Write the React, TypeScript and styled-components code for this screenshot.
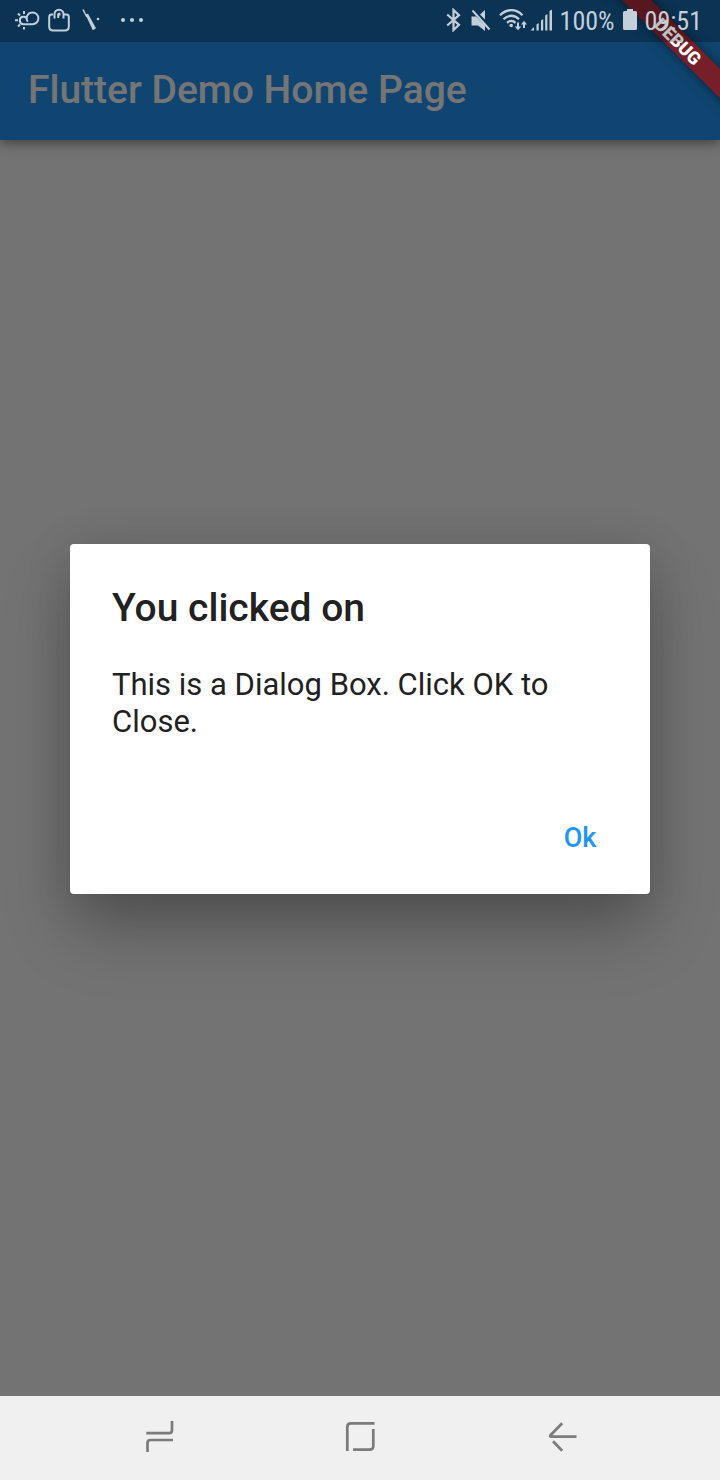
import React, { useState } from "react";
import styled, { createGlobalStyle } from "styled-components";

const GlobalStyle = createGlobalStyle`
  *, *::before, *::after { box-sizing: border-box; }
  body { margin: 0; font-family: Roboto, "Liberation Sans", sans-serif; }
  h1, h2, p { margin: 0; }
`;

const Screen = styled.div`
  display: flex;
  flex-direction: column;
  min-height: 100vh;
`;

const AppArea = styled.div`
  position: relative;
  flex: 1;
  display: flex;
  flex-direction: column;
  overflow: hidden;
  background: #fafafa;
`;

const AppBar = styled.header`
  display: flex;
  align-items: center;
  height: 140px;
  padding: 42px 28px 2px;
  background: #2196f3;
  box-shadow: 0 4px 11px rgba(0, 0, 0, 0.4);
`;

const AppTitle = styled.h1`
  font-size: 39px;
  line-height: 44px;
  font-weight: 500;
  color: #fff;
`;

const Scrim = styled.div`
  position: absolute;
  inset: 0;
  display: flex;
  align-items: center;
  justify-content: center;
  padding: 42px 70px 0;
  background: rgba(0, 0, 0, 0.54);
`;

const Dialog = styled.section`
  display: flex;
  flex-direction: column;
  width: 100%;
  background: #fff;
  border-radius: 4px;
  box-shadow: 0 36px 64px -4px rgba(0, 0, 0, 0.28),
    0 4px 48px rgba(0, 0, 0, 0.12);
`;

const DialogTitle = styled.h2`
  padding: 42px 42px 0;
  font-size: 39px;
  line-height: 44px;
  font-weight: 500;
  color: #212121;
`;

const DialogText = styled.p`
  padding: 36px 42px 42px;
  font-size: 31px;
  line-height: 37px;
  color: #212121;
`;

const DialogActions = styled.div`
  display: flex;
  justify-content: flex-end;
  padding: 14px;
`;

const FlatButton = styled.button`
  width: 112px;
  height: 84px;
  border: 0;
  padding: 0;
  background: transparent;
  color: #2196f3;
  font: 500 27px/32px Roboto, "Liberation Sans", sans-serif;
`;

const Ribbon = styled.div`
  position: absolute;
  top: 31px;
  right: -58px;
  width: 200px;
  height: 21px;
  transform: rotate(45deg);
  background: #761f28;
  box-shadow: 0 0 12px rgba(0, 0, 0, 0.5);
  color: #fff;
  font-size: 18px;
  line-height: 21px;
  font-weight: 900;
  text-align: center;
`;

const StatusBar = styled.div`
  position: absolute;
  inset: 0 0 auto;
  display: flex;
  align-items: center;
  justify-content: space-between;
  height: 42px;
  padding: 0 18px 2px 14px;
  background: rgba(0, 0, 0, 0.25);
  color: #c3d0da;
`;

const StatusGroup = styled.div<{ $gap: number }>`
  display: flex;
  align-items: center;
  gap: ${(p) => p.$gap}px;
`;

const StatusText = styled.span`
  font-family: "Roboto Condensed", "Liberation Sans Narrow", Roboto, sans-serif;
  font-size: 26px;
  line-height: 38px;
  padding-top: 1px;
`;

const NavBar = styled.nav`
  display: flex;
  height: 84px;
  padding: 0 60px;
  background: #f0f0f0;
`;

const NavButton = styled.button`
  flex: 1;
  display: flex;
  align-items: center;
  justify-content: center;
  border: 0;
  padding: 0 0 4px;
  background: transparent;
  color: #7b7b7b;
`;

type GlyphProps = { w: number; children: React.ReactNode };

const Glyph = ({ w, children }: GlyphProps) => (
  <svg width={w} height="24" viewBox={`0 0 ${w} 24`} fill="none" stroke="currentColor" strokeWidth="2" aria-hidden="true">
    {children}
  </svg>
);

const WeatherIcon = () => (
  <Glyph w={26}>
    <path d="M13 16.2H9.5a3.7 3.7 0 1 1 3.6-4.6M13 16.2h5.500a5.900 5.900 0 1 0-5.900-5.900c0 1.500.4 2.400 1.200 3.400" />
    <path d="M10 3v3M4 5.500l2 2M1 12.200h3M4 18.500l2-2M10 19v2.500M15.500 5l-.5.500" />
  </Glyph>
);

const BagIcon = () => (
  <Glyph w={22}>
    <path d="M5 6.500H3.500Q1.200 6.500 1.200 9v9.500q0 4 4 4h11.600q4 0 4-4V9q0-2.500-2.300-2.500H16M9.500 6.500h3" />
    <path d="M6.500 10.500V6.200a4.500 4.500 0 0 1 9 0v4.300M10.200 10V7.500a2 2 0 0 1 2-2" />
  </Glyph>
);

const PenIcon = () => (
  <Glyph w={26}>
    <path d="M5 1.500 8.800 9" strokeWidth="1.500" />
    <path d="M7.500 6.500 10 5.800l8 14.500-3.200 2z" fill="currentColor" stroke="none" />
    <circle cx="20" cy="11" r="1.300" fill="currentColor" stroke="none" />
  </Glyph>
);

const MoreIcon = () => (
  <Glyph w={40}>
    <g fill="currentColor" stroke="none">
      <circle cx="11" cy="12" r="2.100" />
      <circle cx="20" cy="12" r="2.100" />
      <circle cx="29" cy="12" r="2.100" />
    </g>
  </Glyph>
);

const BluetoothIcon = () => (
  <Glyph w={15}>
    <path d="m1.200 6.500 11.800 10.300-5.500 5.200V2L13 7.200 1.200 17.500" strokeWidth="2.200" />
  </Glyph>
);

const MuteIcon = () => (
  <Glyph w={20}>
    <path d="M.5 8.500H5l9 9V23l-7-5.500H.5zM9 6.500l5-4.500v9.500z" fill="currentColor" stroke="none" />
    <path d="m1.500 2.500 17 19" />
  </Glyph>
);

const WifiIcon = () => (
  <Glyph w={28}>
    <path d="M1 7.200C7.500.5 17 .5 23.500 7.200M4.500 11.200c4.600-4.600 11-4.600 15.500 0M8 14.800c2.600-2.400 6-2.400 8.500 0" strokeWidth="2.300" />
    <circle cx="12.200" cy="17.500" r="1.800" fill="currentColor" stroke="none" />
    <path d="M19 14.500v5M25 20v-5" />
    <path d="M15.700 18.500h6.600L19 22.200zM22 16.500h6l-3-3.700z" fill="currentColor" stroke="none" />
  </Glyph>
);

const SignalIcon = () => (
  <Glyph w={22}>
    <path d="M.5 22.500 4 19v3.500zM6.500 16.500l2.200-1.500v7.500H6.500zM11 12.500l2.200-1.500v11.500H11zM15.200 7.500l2.200-1.500v16.500h-2.200zM19.500 3l2.500-1.500v21h-2.500z" fill="currentColor" stroke="none" />
  </Glyph>
);

const BatteryIcon = () => (
  <Glyph w={14}>
    <path d="M4 1h6v2h2.500Q14 3 14 4.500v16q0 1.500-1.500 1.500h-11Q0 22 0 20.500v-16Q0 3 1.500 3H4z" fill="currentColor" stroke="none" />
  </Glyph>
);

const RECENTS = "M3.300 14.200H26Q29 14.200 29 11.200V2M4.500 33V24Q4.500 21 7.500 21H30";
const HOME = "M4.300 32V8Q4.300 4.400 8 4.400H31.500M30.300 10V27Q30.300 30.600 26.600 30.600H10";
const BACK = "M19.200 4.200 7.500 16.200Q6.500 17.600 8.300 17.600H33.500M10 22.300 19.200 31.800";

const NavGlyph = ({ d }: { d: string }) => (
  <svg width="34" height="34" viewBox="0 0 34 34" fill="none" stroke="currentColor" strokeWidth="2.700" aria-hidden="true">
    <path d={d} />
  </svg>
);

export default function App() {
  const [open, setOpen] = useState(true);
  return (
    <>
      <GlobalStyle />
      <Screen>
        <AppArea>
          <AppBar>
            <AppTitle>Flutter Demo Home Page</AppTitle>
          </AppBar>
          {open && (
            <Scrim>
              <Dialog role="dialog" aria-modal="true" aria-labelledby="dialog-title">
                <DialogTitle id="dialog-title">You clicked on</DialogTitle>
                <DialogText>This is a Dialog Box. Click OK to Close.</DialogText>
                <DialogActions>
                  <FlatButton onClick={() => setOpen(false)}>Ok</FlatButton>
                </DialogActions>
              </Dialog>
            </Scrim>
          )}
          <Ribbon>DEBUG</Ribbon>
          <StatusBar>
            <StatusGroup $gap={8}>
              <WeatherIcon />
              <BagIcon />
              <PenIcon />
              <MoreIcon />
            </StatusGroup>
            <StatusGroup $gap={8}>
              <StatusGroup $gap={10}>
                <BluetoothIcon />
                <MuteIcon />
              </StatusGroup>
              <StatusGroup $gap={3}>
                <WifiIcon />
                <SignalIcon />
              </StatusGroup>
              <StatusText>100%</StatusText>
              <BatteryIcon />
              <StatusText>09:51</StatusText>
            </StatusGroup>
          </StatusBar>
        </AppArea>
        <NavBar>
          <NavButton aria-label="Recent apps"><NavGlyph d={RECENTS} /></NavButton>
          <NavButton aria-label="Home"><NavGlyph d={HOME} /></NavButton>
          <NavButton aria-label="Back"><NavGlyph d={BACK} /></NavButton>
        </NavBar>
      </Screen>
    </>
  );
}
